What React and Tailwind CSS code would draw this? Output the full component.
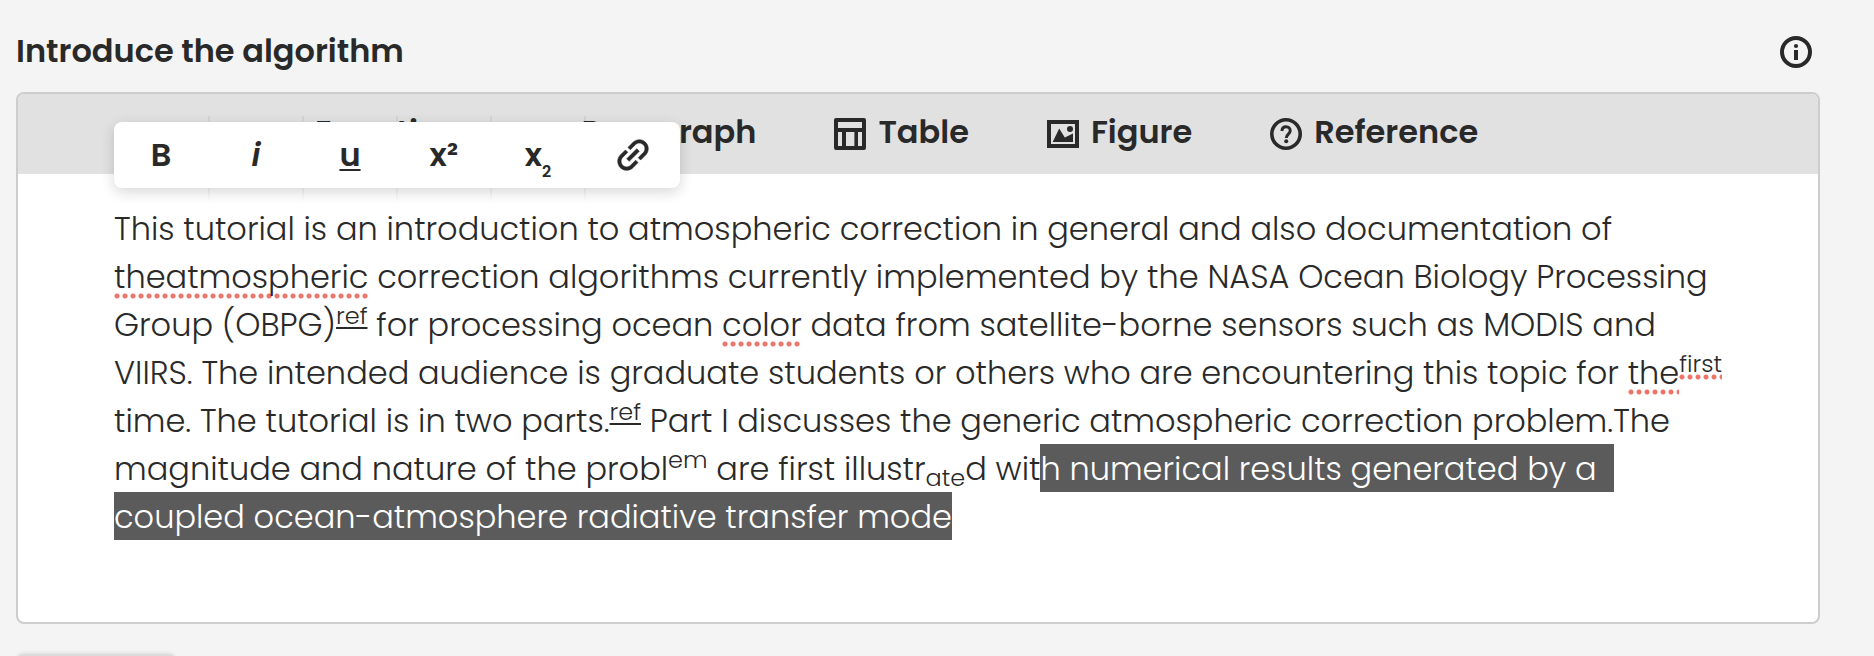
function InfoIcon() {
  return (
    <svg viewBox="0 0 32 32" className="size-8" aria-hidden="true">
      <circle cx="16" cy="16" r="14" fill="none" stroke="currentColor" strokeWidth="4" />
      <circle cx="16" cy="10" r="2.1" fill="currentColor" />
      <path d="M14 14h4v10h-4z" fill="currentColor" />
    </svg>
  );
}

function EquationIcon() {
  return (
    <svg viewBox="0 0 32 32" className="size-8" aria-hidden="true">
      <path d="M25 12v-2H8l9 7-9 7h17v-2" fill="none" stroke="currentColor" strokeWidth="4" />
    </svg>
  );
}

function ParagraphIcon() {
  return (
    <svg viewBox="0 0 32 32" className="size-8" aria-hidden="true">
      <path d="M4 12h24M4 19h24M4 26h16" fill="none" stroke="currentColor" strokeWidth="4" />
    </svg>
  );
}

function TableIcon() {
  return (
    <svg viewBox="0 0 32 32" className="size-8" aria-hidden="true">
      <path
        fillRule="evenodd"
        fill="currentColor"
        d="M2 0h28a2 2 0 0 1 2 2v28a2 2 0 0 1-2 2H2a2 2 0 0 1-2-2V2a2 2 0 0 1 2-2zM4 4v6h24V4zM4 14v14h4V14zM12 14v14h8.400V14zM24 14v14h4V14z"
      />
    </svg>
  );
}

function FigureIcon() {
  return (
    <svg viewBox="0 0 32 32" className="size-8" aria-hidden="true">
      <path d="M2 4h28v24H2z" fill="none" stroke="currentColor" strokeWidth="4" />
      <path d="M5.700 24L12.200 10.500l5.600 9 8.200-4V24z" fill="currentColor" />
      <circle cx="23" cy="11" r="3" fill="currentColor" />
    </svg>
  );
}

function ReferenceIcon() {
  return (
    <svg viewBox="0 0 32 32" className="size-8" aria-hidden="true">
      <circle cx="16" cy="16" r="14.200" fill="none" stroke="currentColor" strokeWidth="3.600" />
      <path
        d="M12 13c0-2.600 1.700-4.200 4.100-4.200s4.100 1.600 4.100 3.900c0 3.300-3.900 3.600-3.900 7.300"
        fill="none"
        stroke="currentColor"
        strokeWidth="3"
      />
      <circle cx="16.200" cy="23.300" r="2" fill="currentColor" />
    </svg>
  );
}

function LinkIcon() {
  return (
    <svg viewBox="0 0 32 32" className="size-8" aria-hidden="true">
      <path
        transform="translate(16 16) rotate(-45) scale(1.79) translate(-12 -12)"
        fill="currentColor"
        stroke="currentColor"
        strokeWidth="0.3"
        d="M3.900 12c0-1.710 1.390-3.100 3.100-3.100h4V7H7c-2.760 0-5 2.240-5 5s2.240 5 5 5h4v-1.900H7c-1.710 0-3.100-1.390-3.100-3.100zM8 13h8v-2H8v2zm9-6h-4v1.900h4c1.710 0 3.100 1.390 3.100 3.100s-1.390 3.100-3.100 3.100h-4V17h4c2.760 0 5-2.240 5-5s-2.240-5-5-5z"
      />
    </svg>
  );
}

const inserts = [
  { label: "Equation", Icon: EquationIcon },
  { label: "Paragraph", Icon: ParagraphIcon },
  { label: "Table", Icon: TableIcon },
  { label: "Figure", Icon: FigureIcon },
  { label: "Reference", Icon: ReferenceIcon },
];

const formats = [
  { name: "Bold", mark: "B" },
  { name: "Italic", mark: <i>i</i> },
  { name: "Underline", mark: <span className="underline decoration-2 underline-offset-3">u</span> },
  { name: "Superscript", mark: "x²" },
  {
    name: "Subscript",
    mark: (
      <span>
        x<sub className="bottom-[-11px] text-base leading-none">2</sub>
      </span>
    ),
  },
  { name: "Link", mark: <LinkIcon /> },
];

function Misspelled({ children }) {
  return (
    <span className="bg-[radial-gradient(circle_at_3px_3px,#ee7468_2px,transparent_3px)] bg-[length:8px_6px] bg-bottom-left bg-repeat-x">
      {children}
    </span>
  );
}

function Sup({ children }) {
  return <sup className="text-2xl leading-none">{children}</sup>;
}

function FormatPopup() {
  return (
    <div
      role="toolbar"
      aria-label="Text format"
      className="absolute top-7 left-24 flex gap-0.5 rounded-lg bg-white shadow-[0_4px_14px_rgba(0,0,0,0.16)]"
    >
      {formats.map(({ name, mark }) => (
        <button
          key={name}
          type="button"
          aria-label={name}
          className="relative flex h-[66px] w-[92px] items-center justify-center font-semibold first:w-[94px] last:w-[94px] not-first:before:absolute not-first:before:-top-1.5 not-first:before:-left-0.5 not-first:before:h-1.5 not-first:before:w-0.5 not-first:before:bg-black/5 not-first:after:absolute not-first:after:top-full not-first:after:-left-0.5 not-first:after:h-4 not-first:after:w-0.5 not-first:after:bg-linear-to-b not-first:after:from-black/5 not-first:after:to-transparent"
        >
          {mark}
        </button>
      ))}
    </div>
  );
}

export default function App() {
  return (
    <main className="h-screen overflow-hidden bg-[#f4f4f4] pt-7 pr-[54px] pl-4 font-['Poppins','Noto_Sans',sans-serif] text-[32px] leading-[48px] text-[#292929]">
      <header className="flex h-12 items-center justify-between pr-2">
        <h2 id="section-title" className="pb-0.5 font-semibold">
          Introduce the algorithm
        </h2>
        <button type="button" aria-label="About this section">
          <InfoIcon />
        </button>
      </header>

      <section
        aria-labelledby="section-title"
        className="relative mt-4 rounded-lg border-2 border-[#cdcdcd] bg-white"
      >
        <div className="flex h-20 items-center gap-[78px] rounded-t-md bg-[#e1e1e1] pl-[253px] font-semibold">
          {inserts.map(({ label, Icon }) => (
            <button key={label} type="button" className="flex items-center gap-3">
              <Icon />
              <span className="pb-1">{label}</span>
            </button>
          ))}
        </div>

        <div
          role="textbox"
          aria-multiline="true"
          aria-labelledby="section-title"
          className="px-24 pt-[31px] pb-[81px] font-light"
        >
          This tutorial is an introduction to atmospheric correction in general and also documentation of{" "}
          <Misspelled>theatmospheric</Misspelled> correction algorithms currently implemented by the NASA Ocean
          Biology Processing Group (OBPG)
          <Sup>
            <a href="#ref-1" className="underline decoration-2 underline-offset-3">ref</a>
          </Sup>{" "}
          for processing ocean <Misspelled>color</Misspelled> data from satellite-borne sensors such as MODIS and
          VIIRS. The intended audience is graduate students or others who are encountering this topic for{" "}
          <Misspelled>the</Misspelled>
          <Sup>
            <Misspelled>first</Misspelled>
          </Sup>{" "}
          time. The tutorial is in two parts.
          <Sup>
            <a href="#ref-2" className="underline decoration-2 underline-offset-3">ref</a>
          </Sup>{" "}
          Part I discusses the generic atmospheric correction problem.The magnitude and nature of the probl
          <Sup>em</Sup> are first illustr<sub className="text-2xl leading-none">ate</sub>d wit
          <mark className="bg-[#5b5b5b] pt-0.5 pb-px text-white">
            h numerical results generated by a&nbsp;&nbsp;
            <wbr />
            coupled ocean-atmosphere radiative transfer mode
          </mark>
        </div>

        <FormatPopup />
      </section>

      <button
        type="button"
        aria-label="Add section"
        className="mt-[30px] block h-16 w-40 rounded-lg bg-[#dcdcdc] shadow-[0_0_4px_rgba(0,0,0,0.16)]"
      />
    </main>
  );
}
